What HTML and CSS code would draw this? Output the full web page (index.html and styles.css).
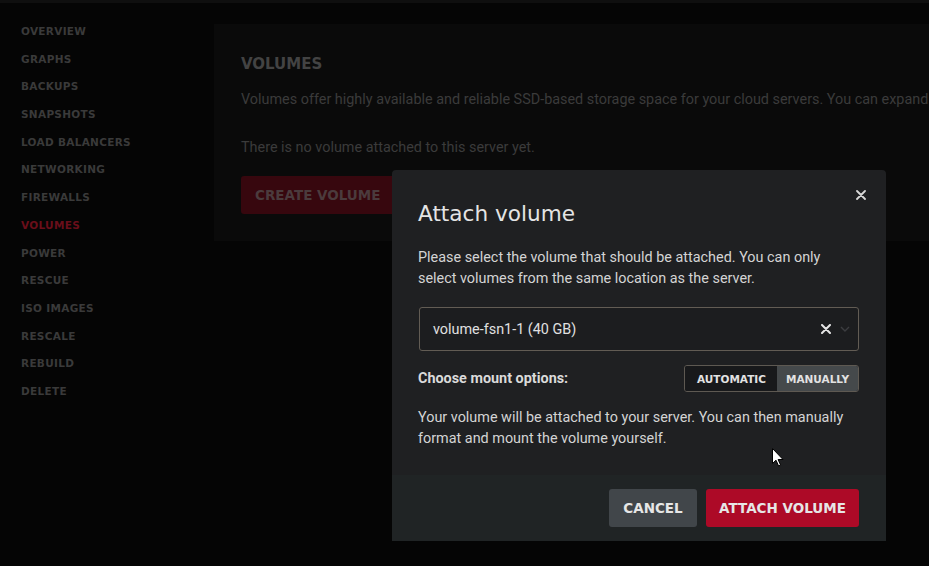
FILE: index.html
```html
<!DOCTYPE html>
<html lang="en">
<head>
<meta charset="utf-8">
<title>Volumes</title>
<link rel="stylesheet" href="styles.css">
</head>
<body>
<div class="topstrip"></div>
<div class="page">
  <nav class="sidebar">
    <a class="nav-item">OVERVIEW</a>
    <a class="nav-item">GRAPHS</a>
    <a class="nav-item">BACKUPS</a>
    <a class="nav-item">SNAPSHOTS</a>
    <a class="nav-item">LOAD BALANCERS</a>
    <a class="nav-item">NETWORKING</a>
    <a class="nav-item">FIREWALLS</a>
    <a class="nav-item active">VOLUMES</a>
    <a class="nav-item">POWER</a>
    <a class="nav-item">RESCUE</a>
    <a class="nav-item">ISO IMAGES</a>
    <a class="nav-item">RESCALE</a>
    <a class="nav-item">REBUILD</a>
    <a class="nav-item">DELETE</a>
  </nav>
  <main class="main">
    <section class="card">
      <h2 class="card-title">VOLUMES</h2>
      <p class="card-desc">Volumes offer highly available and reliable SSD-based storage space for your cloud servers. You can expand</p>
      <p class="card-empty">There is no volume attached to this server yet.</p>
      <button class="btn-create">CREATE VOLUME</button>
    </section>
  </main>
</div>

<div class="modal">
  <div class="modal-body">
    <button class="modal-close" aria-label="Close">
      <svg width="10" height="10" viewBox="0 0 10 10"><path d="M1 1L9 9M9 1L1 9" stroke="#d8d8d8" stroke-width="1.8" stroke-linecap="round"/></svg>
    </button>
    <h1 class="modal-title">Attach volume</h1>
    <p class="modal-text">Please select the volume that should be attached. You can only select volumes from the same location as the server.</p>
    <div class="select">
      <span class="select-value">volume-fsn1-1 (40 GB)</span>
      <span class="select-clear">
        <svg width="10" height="10" viewBox="0 0 10 10"><path d="M1 1L9 9M9 1L1 9" stroke="#e6e6e6" stroke-width="2" stroke-linecap="round"/></svg>
      </span>
      <span class="select-arrow">
        <svg width="10" height="6" viewBox="0 0 10 6"><path d="M1 1L5 5L9 1" fill="none" stroke="#3c3d40" stroke-width="1.4"/></svg>
      </span>
    </div>
    <div class="mount-row">
      <span class="mount-label">Choose mount options:</span>
      <div class="toggle">
        <span class="toggle-opt">AUTOMATIC</span>
        <span class="toggle-opt on">MANUALLY</span>
      </div>
    </div>
    <p class="modal-text last">Your volume will be attached to your server. You can then manually format and mount the volume yourself.</p>
  </div>
  <div class="modal-footer">
    <button class="btn btn-cancel">CANCEL</button>
    <button class="btn btn-attach">ATTACH VOLUME</button>
  </div>
</div>

<svg class="cursor" width="12" height="19" viewBox="0 0 12 19"><path d="M0.5 0.5L0.5 15.5L4 12.2L6.6 18L8.6 17.1L6.1 11.5L11 11.5Z" fill="#ffffff" stroke="#000000" stroke-width="1"/></svg>
</body>
</html>
```

FILE: styles.css
```css
* { box-sizing: border-box; }
html, body { margin: 0; padding: 0; }
body {
  width: 929px;
  height: 566px;
  overflow: hidden;
  background: #050505;
  font-family: Roboto, "Liberation Sans", sans-serif;
  position: relative;
}
.topstrip { height: 3px; background: #0f0f0f; }
.page { display: flex; }
.sidebar {
  width: 214px;
  flex: none;
  display: flex;
  flex-direction: column;
  padding: 15px 0 0 21px;
}
.nav-item {
  font-family: "DejaVu Sans", sans-serif;
  font-weight: bold;
  font-size: 10.5px;
  letter-spacing: 0.3px;
  line-height: 27.7px;
  height: 27.7px;
  color: #3a3a3a;
}
.nav-item.active { color: #6a0e1a; }
.main { flex: 1; overflow: hidden; padding-top: 21px; }
.card {
  background: #0a0a0a;
  width: 900px;
  height: 217px;
  padding: 30px 0 0 27px;
}
.card-title {
  margin: 0;
  font-family: "DejaVu Sans", sans-serif;
  font-weight: bold;
  font-size: 15px;
  line-height: 20px;
  color: #434343;
}
.card-desc, .card-empty {
  margin: 15px 0 0;
  font-size: 14.4px;
  line-height: 21px;
  color: #3b3b3b;
  white-space: nowrap;
}
.card-empty { margin-top: 27px; }
.btn-create {
  margin-top: 18px;
  height: 38px;
  padding: 0 14px;
  border: 0;
  border-radius: 3px;
  background: #37070e;
  color: #4b3b3d;
  font-family: "DejaVu Sans", sans-serif;
  font-weight: bold;
  font-size: 13.5px;
  width: 170px;
  text-align: left;
  white-space: nowrap;
}

.modal {
  position: absolute;
  left: 392px;
  top: 170px;
  width: 494px;
  height: 371px;
  display: flex;
  flex-direction: column;
  background: #1f2022;
  border-radius: 4px 4px 0 0;
}
.modal-body {
  position: relative;
  flex: 1;
  padding: 29px 27px 0 26px;
}
.modal-close {
  position: absolute;
  right: 20px;
  top: 20px;
  width: 10px;
  height: 10px;
  padding: 0;
  border: 0;
  background: none;
  display: flex;
}
.modal-title {
  margin: 0;
  font-family: "DejaVu Sans", sans-serif;
  font-weight: normal;
  font-size: 21.6px;
  line-height: 30px;
  color: #e4e4e4;
}
.modal-text {
  margin: 18px 0 0;
  font-size: 14.4px;
  line-height: 21px;
  color: #d4d4d4;
}
.modal-text.last { margin-top: 15px; }
.select {
  margin-top: 18px;
  margin-left: 1px;
  height: 44px;
  border: 1px solid #625c54;
  border-radius: 3px;
  background: #1c1d1f;
  display: flex;
  align-items: center;
  padding: 0 8px 0 13px;
}
.select-value { flex: 1; font-size: 14.4px; color: #e0e0e0; }
.select-clear { display: flex; margin-right: 9px; }
.select-arrow { display: flex; }
.mount-row {
  margin-top: 14px;
  display: flex;
  align-items: center;
  justify-content: space-between;
}
.mount-label { font-size: 14.4px; font-weight: bold; color: #dadada; }
.toggle {
  display: flex;
  height: 27px;
  border: 1px solid #5e5952;
  border-radius: 3px;
  overflow: hidden;
}
.toggle-opt {
  font-family: "DejaVu Sans", sans-serif;
  font-weight: bold;
  font-size: 10.5px;
  color: #e2e2e2;
  display: flex;
  align-items: center;
  padding: 0 11px 0 12px;
  background: #18191b;
}
.toggle-opt.on { background: #45494b; padding: 0 9px; }
.modal-footer {
  height: 66px;
  flex: none;
  background: #202425;
  display: flex;
  justify-content: flex-end;
  align-items: center;
  gap: 9px;
  padding-right: 27px;
}
.btn {
  height: 38px;
  border: 0;
  border-radius: 3px;
  font-family: "DejaVu Sans", sans-serif;
  font-weight: bold;
  font-size: 13.5px;
  color: #e6e6e6;
  padding: 0;
  white-space: nowrap;
  text-align: center;
}
.btn-cancel { background: #41464a; width: 88px; }
.btn-attach { background: #ad0a27; width: 153px; }
.cursor { position: absolute; left: 772px; top: 448px; }
```
